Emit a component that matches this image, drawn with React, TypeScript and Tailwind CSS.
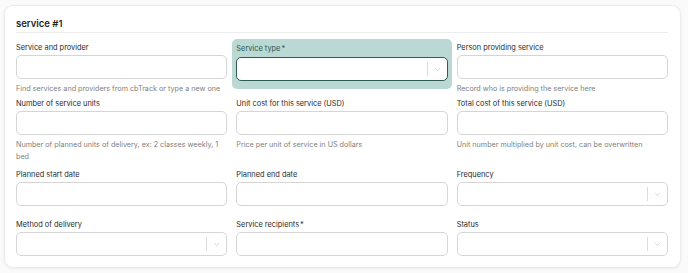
import { ChevronDown } from "lucide-react";

type FieldProps = {
  label: string;
  required?: boolean;
  helper?: string;
  select?: boolean;
};

function SelectChevron() {
  return (
    <div className="flex h-full items-center">
      <div className="h-[14px] w-px bg-[#dcdcdc]" />
      <div className="flex w-[19px] items-center justify-center text-[#b8b8b8]">
        <ChevronDown size={9} strokeWidth={1.5} />
      </div>
    </div>
  );
}

function Field({ label, required, helper, select }: FieldProps) {
  return (
    <div className="flex flex-col">
      <div className="h-[10px] text-[7.4px] leading-[10px] text-[#2a2a2a]">
        {label}
        {required ? <span className="ml-[1px]">*</span> : null}
      </div>
      <div className="mt-[2px] flex h-[24px] items-center justify-end rounded-[5px] border border-[#d5d5d5] bg-white">
        {select ? <SelectChevron /> : null}
      </div>
      {helper ? (
        <p className="mt-[4px] text-[7.2px] leading-[12px] text-[#808080]">{helper}</p>
      ) : null}
    </div>
  );
}

function ActiveField() {
  return (
    <div className="-mx-[4px] -mt-[4px] self-start rounded-[5px] bg-[#bad9d4] px-[4px] pb-[8px] pt-[5px]">
      <div className="h-[10px] text-[7.4px] leading-[10px] text-[#2c5753]">
        Service type<span className="ml-[1px]">*</span>
      </div>
      <div className="mt-[3px] flex h-[24px] items-center justify-end rounded-[5px] border-[1.5px] border-[#2f5a56] bg-white">
        <SelectChevron />
      </div>
    </div>
  );
}

export default function App() {
  return (
    <div
      className="min-h-[273px] w-[688px] bg-[#fafafa] px-[4px] pt-[5px]"
      style={{ fontFamily: "Inter, 'Noto Sans', sans-serif" }}
    >
      <section className="h-[263px] w-[677px] rounded-[9px] border border-[#ececec] bg-white px-[11px] shadow-[0_1px_3px_rgba(0,0,0,0.06)]">
        <div className="flex h-[26px] items-end pb-[2px]">
          <h2 className="text-[9.5px] font-semibold leading-[12px] text-[#1f1f1f]">service #1</h2>
        </div>
        <div className="h-px w-[652px] bg-[#ececec]" />

        <div className="mt-[10px] grid w-[652px] grid-cols-3 gap-x-[9px]">
          <Field label="Service and provider" helper="Find services and providers from cbTrack or type a new one" />
          <ActiveField />
          <Field label="Person providing service" helper="Record who is providing the service here" />
        </div>

        <div className="mt-[4px] grid w-[652px] grid-cols-3 gap-x-[9px]">
          <Field
            label="Number of service units"
            helper="Number of planned units of delivery, ex: 2 classes weekly, 1 bed"
          />
          <Field label="Unit cost for this service (USD)" helper="Price per unit of service in US dollars" />
          <Field
            label="Total cost of this service (USD)"
            helper="Unit number multiplied by unit cost, can be overwritten"
          />
        </div>

        <div className="mt-[7px] grid w-[652px] grid-cols-3 gap-x-[9px]">
          <Field label="Planned start date" />
          <Field label="Planned end date" />
          <Field label="Frequency" select />
        </div>

        <div className="mt-[14px] grid w-[652px] grid-cols-3 gap-x-[9px]">
          <Field label="Method of delivery" select />
          <Field label="Service recipients" required />
          <Field label="Status" select />
        </div>
      </section>
    </div>
  );
}
